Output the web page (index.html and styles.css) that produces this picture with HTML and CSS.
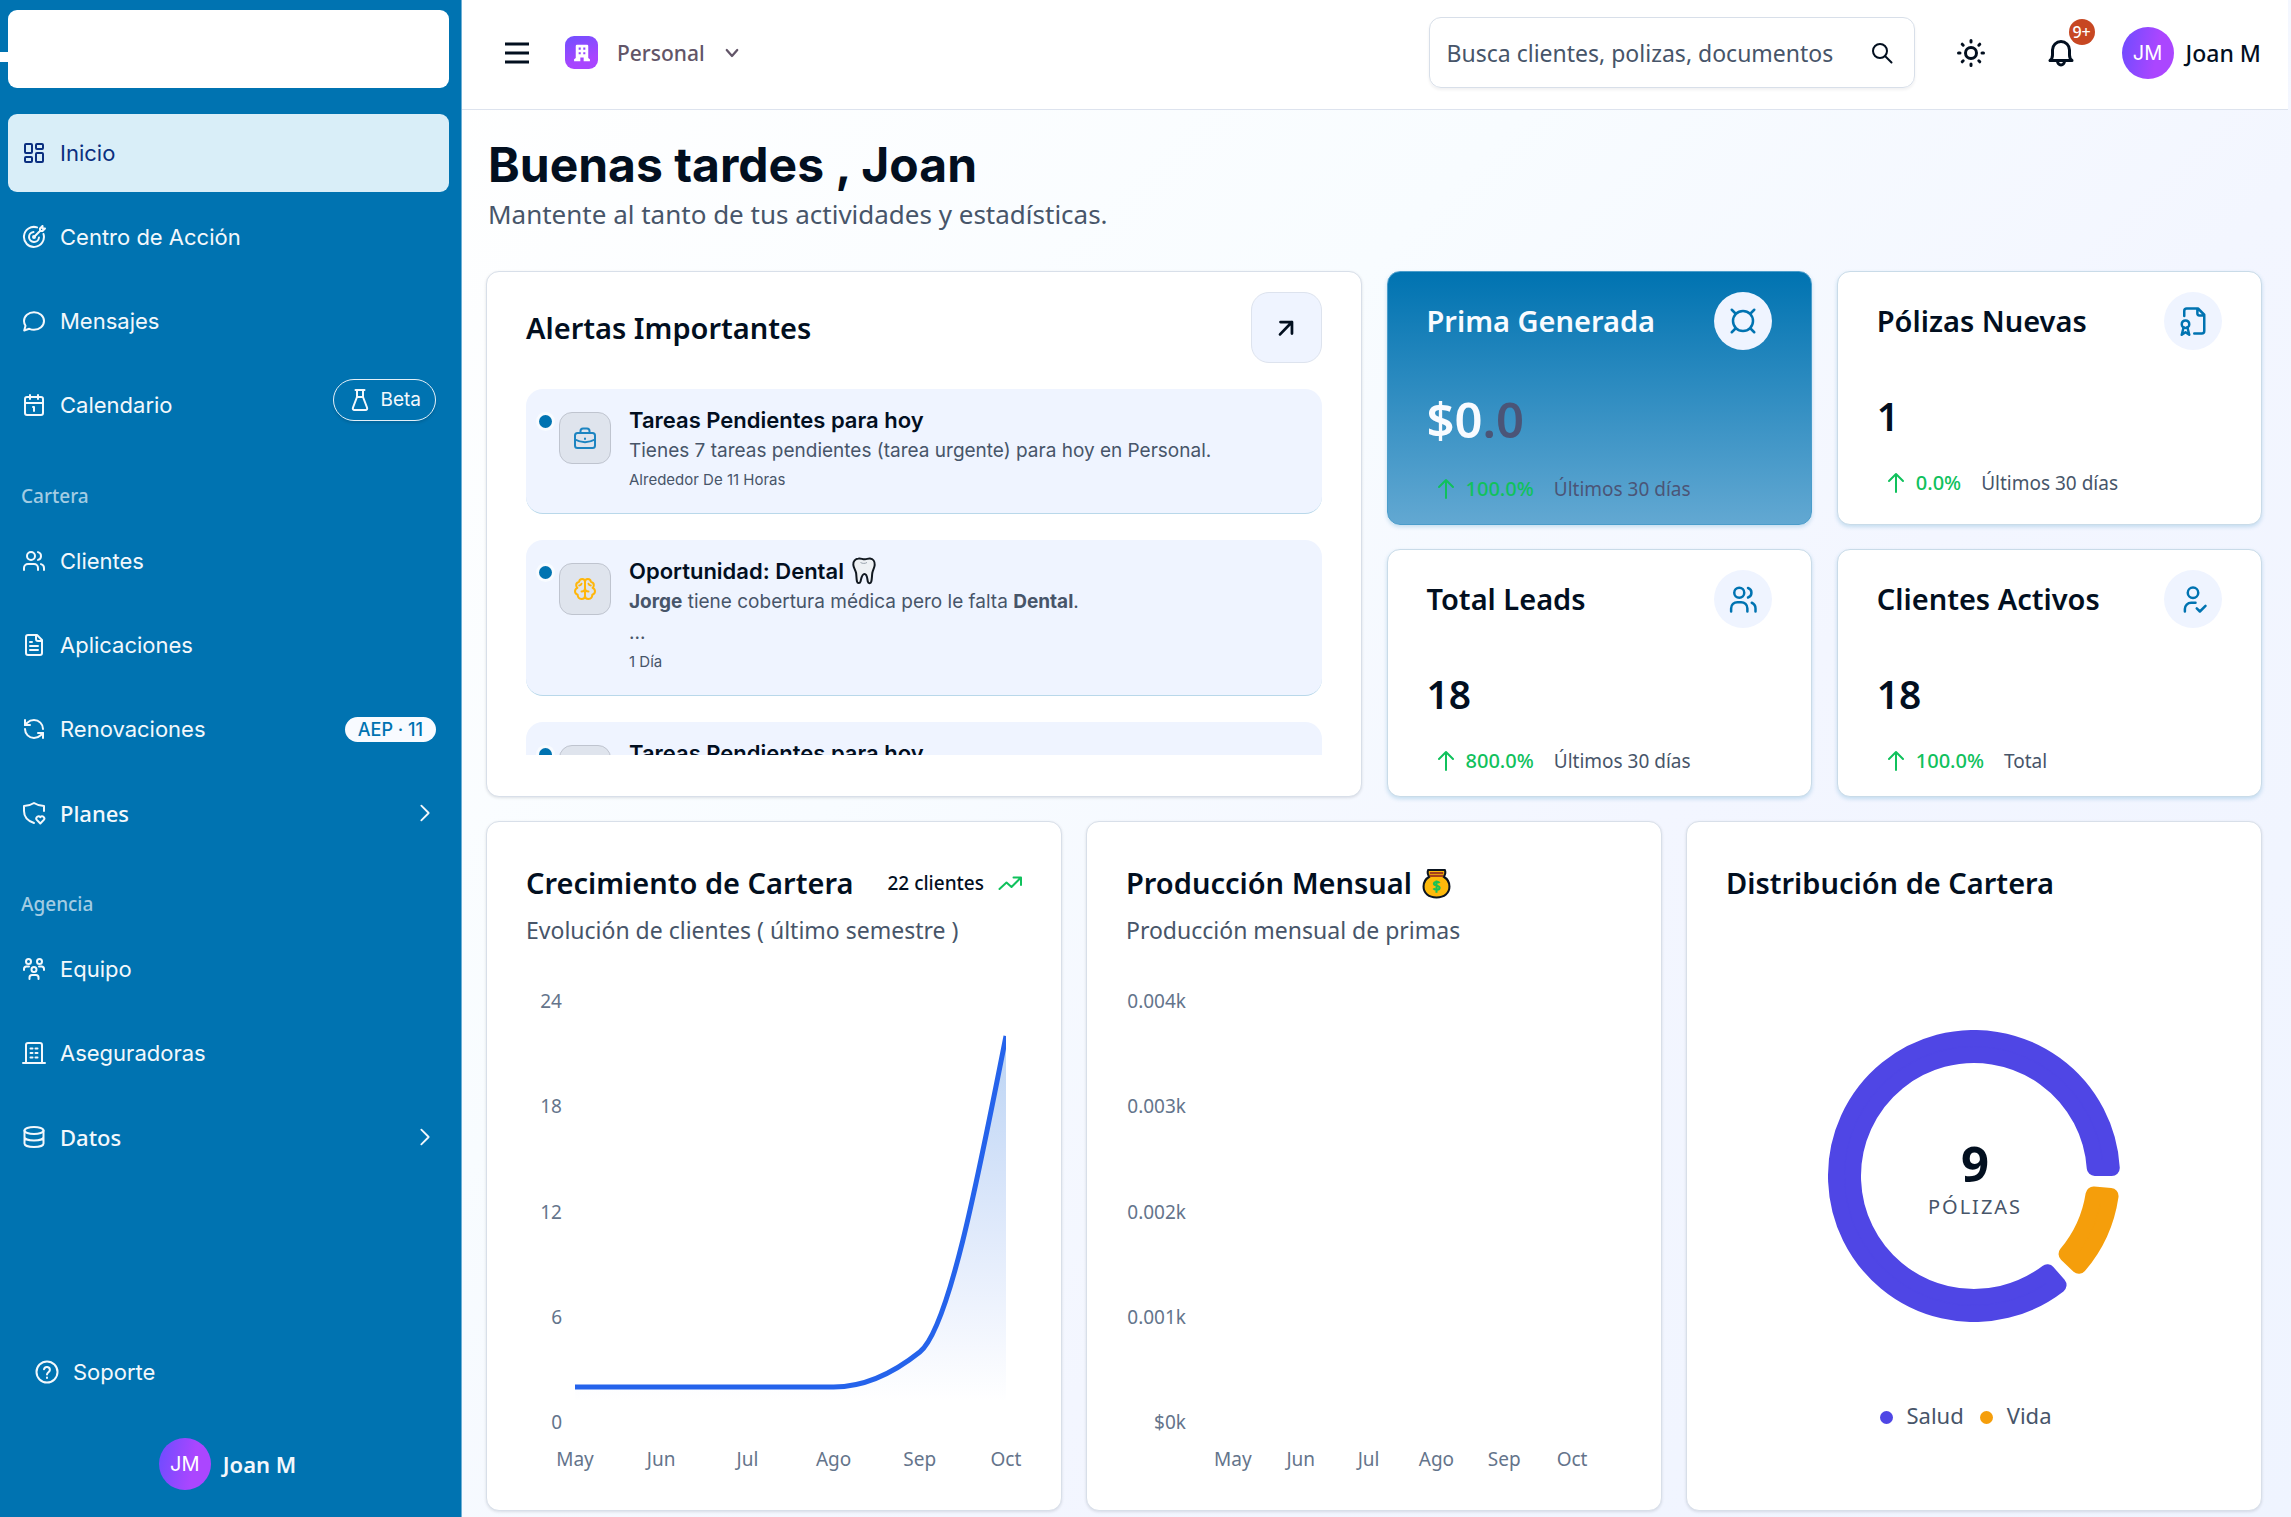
FILE: index.html
```html
<!DOCTYPE html>
<html lang="es">
<head>
<meta charset="utf-8">
<title>Inicio</title>
<meta name="viewport" content="width=device-width, initial-scale=1">
<link rel="stylesheet" href="styles.css">
</head>
<body>
<div class="app">
  <aside class="sidebar">
    <a class="brand" href="#" aria-label="Inicio"></a>
    <nav class="nav">
      <a class="nav-item is-active" href="#">
        <svg class="icon" viewBox="0 0 24 24"><rect x="3" y="3" width="7" height="9" rx="1"/><rect x="14" y="3" width="7" height="5" rx="1"/><rect x="14" y="12" width="7" height="9" rx="1"/><rect x="3" y="16" width="7" height="5" rx="1"/></svg>
        <span>Inicio</span>
      </a>
      <a class="nav-item" href="#">
        <svg class="icon" viewBox="0 0 24 24"><path d="M12 12l6-6V3.500L20.500 1v2.500H23L20.500 6H18"/><path d="M21.500 9A10 10 0 1 1 15 2.400"/><path d="M17 12.500A5 5 0 1 1 11.500 7"/><circle cx="12" cy="12" r="1"/></svg>
        <span>Centro de Acción</span>
      </a>
      <a class="nav-item" href="#">
        <svg class="icon" viewBox="0 0 24 24"><path d="M2.200 21.500l1.300-4.800A8.300 8.300 0 0 1 2 12c0-5 4.500-8.800 10-8.800S22 7 22 12s-4.500 8.800-10 8.800c-1.700 0-3.300-.400-4.700-1z"/></svg>
        <span>Mensajes</span>
      </a>
      <a class="nav-item" href="#">
        <svg class="icon" viewBox="0 0 24 24"><rect x="3" y="4" width="18" height="18" rx="2"/><path d="M8 2v4M16 2v4M3 10h18M11 14h1v4"/></svg>
        <span>Calendario</span>
        <span class="badge-beta"><svg class="icon" viewBox="0 0 24 24"><path d="M9 2v7L5 19.500c-.500 1.500 0 2.500 1.500 2.500h11c1.500 0 2-1 1.500-2.500L15 9V2M7.500 2h9M9 9h6"/></svg>Beta</span>
      </a>
      <h2 class="nav-label">Cartera</h2>
      <a class="nav-item" href="#">
        <svg class="icon" viewBox="0 0 24 24"><path d="M16 21v-2a4 4 0 0 0-4-4H6a4 4 0 0 0-4 4v2"/><circle cx="9" cy="7" r="4"/><path d="M22 21v-2a4 4 0 0 0-3-3.870M16 3.130a4 4 0 0 1 0 7.750"/></svg>
        <span>Clientes</span>
      </a>
      <a class="nav-item" href="#">
        <svg class="icon" viewBox="0 0 24 24"><path d="M15 2H6a2 2 0 0 0-2 2v16a2 2 0 0 0 2 2h12a2 2 0 0 0 2-2V7z"/><path d="M14 2v4a2 2 0 0 0 2 2h4M10 9H8M16 13H8M16 17H8"/></svg>
        <span>Aplicaciones</span>
      </a>
      <a class="nav-item" href="#">
        <svg class="icon" viewBox="0 0 24 24"><path d="M21 12a9 9 0 0 0-9-9 9.750 9.750 0 0 0-6.740 2.740L3 8"/><path d="M3 3v5h5M3 12a9 9 0 0 0 9 9 9.750 9.750 0 0 0 6.740-2.740L21 16"/><path d="M16 16h5v5"/></svg>
        <span>Renovaciones</span>
        <span class="badge-count">AEP · 11</span>
      </a>
      <a class="nav-item alt" href="#">
        <svg class="icon" viewBox="0 0 24 24"><path d="M12 22C6 20 2 15.500 2 10V5c4 0 7-1 10-3 3 2 6 3 10 3v5"/><path d="M18.300 22.500l-3.500-3.600a2.200 2.200 0 0 1 3.500-2.700 2.200 2.200 0 0 1 3.500 2.700z"/></svg>
        <span>Planes</span>
        <svg class="icon chevron" viewBox="0 0 24 24"><path d="M8 4l8 8-8 8"/></svg>
      </a>
      <h2 class="nav-label">Agencia</h2>
      <a class="nav-item" href="#">
        <svg class="icon" viewBox="0 0 24 24"><circle cx="6.500" cy="4.500" r="2.500"/><circle cx="17.500" cy="4.500" r="2.500"/><circle cx="12" cy="12.500" r="2.500"/><path d="M7.500 22v-1.500c0-1.500 1-2.500 2.500-2.500h4c1.500 0 2.500 1 2.500 2.500V22M2 13v-1c0-1.500 1-2.500 2.500-2.500H7M22 13v-1c0-1.500-1-2.500-2.500-2.500H17"/></svg>
        <span>Equipo</span>
      </a>
      <a class="nav-item" href="#">
        <svg class="icon" viewBox="0 0 24 24"><path d="M1 22h22M4 22V4a2 2 0 0 1 2-2h12a2 2 0 0 1 2 2v18M8.500 7.500h2M13.500 7.500h2M8.500 12h2M13.500 12h2M8.500 16.500h2M13.500 16.500h2"/></svg>
        <span>Aseguradoras</span>
      </a>
      <a class="nav-item alt" href="#">
        <svg class="icon" viewBox="0 0 24 24"><ellipse cx="12" cy="5.500" rx="9.500" ry="3.500"/><path d="M2.500 5.500v13c0 2 4 3.500 9.500 3.500s9.500-1.500 9.500-3.500v-13M2.500 12c0 2 4 3.500 9.500 3.500s9.500-1.500 9.500-3.500"/></svg>
        <span>Datos</span>
        <svg class="icon chevron" viewBox="0 0 24 24"><path d="M8 4l8 8-8 8"/></svg>
      </a>
    </nav>
    <div class="sidebar-foot">
      <a class="nav-item support" href="#">
        <svg class="icon" viewBox="0 0 24 24"><circle cx="12" cy="12" r="10.500"/><path d="M9 9.200a3 3 0 0 1 5.900.900c0 2-2.900 2.400-2.900 4.400M12 17.500v.500"/></svg>
        <span>Soporte</span>
      </a>
      <a class="user user-side" href="#"><span class="avatar">JM</span><span>Joan M</span></a>
    </div>
  </aside>

  <div class="page">
    <header class="topbar">
      <button class="icon-btn menu" type="button" aria-label="Menú"><svg class="icon" viewBox="0 0 26 26"><path d="M1 4h24M1 13h24M1 22h24"/></svg></button>
      <button class="workspace" type="button">
        <span class="workspace-logo"><svg viewBox="0 0 24 24"><path fill-rule="evenodd" d="M6 2h12a1.500 1.500 0 0 1 1.500 1.500V18l2 1.500V22H14v-4.500h-4V22H2.500v-2.500l2-1.500V3.500A1.500 1.500 0 0 1 6 2zM8 5.500v2.500h2.500V5.500zm5.500 0v2.500H16V5.500zM8 11v2.500h2.500V11zm5.500 0v2.500H16V11z"/></svg></span>
        <span>Personal</span>
        <svg class="icon caret" viewBox="0 0 24 24"><path d="M5 8l7 8 7-8"/></svg>
      </button>
      <div class="search">
        <input type="text" aria-label="Buscar" placeholder="Busca clientes, polizas, documentos">
        <button class="icon-btn" type="button" aria-label="Buscar"><svg class="icon" viewBox="0 0 24 24"><circle cx="10" cy="10" r="7"/><path d="M15 15l6.500 6.500"/></svg></button>
      </div>
      <button class="icon-btn sun" type="button" aria-label="Tema"><svg class="icon" viewBox="0 0 28 28"><circle cx="14" cy="14" r="5.500"/><path d="M14 1.500v1.500M14 25v1.500M1.500 14H3M25 14h1.500M5.200 5.200l1 1M21.800 21.800l1 1M5.200 22.800l1-1M21.800 6.200l1-1"/></svg></button>
      <button class="icon-btn bell" type="button" aria-label="Notificaciones"><svg class="icon" viewBox="0 0 28 28"><path d="M3 21.500h22c-2-1.500-2.500-3-2.500-5.500v-5a8.500 8.500 0 0 0-17 0v5c0 2.500-.500 4-2.500 5.500zM10.500 22a3.500 4 0 0 0 7 0"/></svg><span class="bell-count">9+</span></button>
      <a class="user user-top" href="#"><span class="avatar">JM</span><span>Joan M</span></a>
    </header>

    <main class="main">
      <h1 class="title">Buenas tardes , Joan</h1>
      <p class="subtitle">Mantente al tanto de tus actividades y estadísticas.</p>

      <div class="stats">
        <section class="card alerts">
          <div class="card-head">
            <h2 class="card-title">Alertas Importantes</h2>
            <button class="open-btn" type="button" aria-label="Abrir"><svg class="icon" viewBox="0 0 24 24"><path d="M6 5.500h12.500V18M18.500 5.500L5.500 19"/></svg></button>
          </div>
          <div class="alert-list">
            <article class="alert">
              <span class="dot"></span>
              <span class="alert-icon blue"><svg class="icon" viewBox="0 0 24 24"><rect x="2" y="7" width="20" height="15" rx="2.500"/><path d="M7.500 7V5A2.500 2.500 0 0 1 10 2.500h4A2.500 2.500 0 0 1 16.500 5v2M2 13.500c6 3.500 14 3.500 20 0M12 12.500v.500"/></svg></span>
              <div class="alert-body"><h3>Tareas Pendientes para hoy</h3><p>Tienes 7 tareas pendientes (tarea urgente) para hoy en Personal.</p><time>Alrededor De 11 Horas</time></div>
            </article>
            <article class="alert">
              <span class="dot"></span>
              <span class="alert-icon amber"><svg class="icon" viewBox="0 0 24 24"><path d="M12 4.500c0-1.500-1.300-2.500-2.800-2.500S6.300 3 6.200 4.800C4.300 5.200 3 6.500 3.200 8.500c.100 1 .500 1.700 1.200 2.300C2.800 11.500 2 12.800 2 14.300c0 1.700 1 3 2.700 3.500C4.800 20.300 6.300 22 8.500 22s3.500-1.400 3.500-3.500z"/><path d="M12 4.500C12 3 13.300 2 14.800 2s2.900 1 3 2.800c1.900.400 3.200 1.700 3 3.700-.100 1-.500 1.700-1.200 2.300 1.600.700 2.400 2 2.400 3.500 0 1.700-1 3-2.700 3.500-.100 2.500-1.600 4.200-3.800 4.200S12 20.600 12 18.500zM8.500 14.500c2 0 3.500-1.500 3.500-3.500 0 2 1.500 3.500 3.500 3.500M6.200 8.500c1.200 0 2-.700 2.300-1.700M17.800 8.500c-1.200 0-2-.700-2.300-1.700"/></svg></span>
              <div class="alert-body">
                <h3>Oportunidad: Dental <svg class="tooth" viewBox="0 0 24 28"><path d="M6.500 1.500C9 1 10.500 2.500 13 2.300c2-.100 3-1 5-.800 3 .300 5 3 4.700 6.500-.300 3.300-2 5-2.400 8-.400 3-.300 6-1 8.500-.500 2.200-3 2.300-3.500 0-.600-2.500-.500-7.500-3.300-7.500S9.200 22 8.500 24.500c-.600 2.300-3 2-3.500 0-.600-2.600-.500-5.500-.900-8.500C3.500 13 1.500 11 1.300 7.800 1 4.300 3.500 2 6.500 1.500z"/><path class="tooth-line" d="M8.500 5.500c2 1.200 4.500 1.200 6.500 0"/></svg></h3>
                <p><strong>Jorge</strong> tiene cobertura médica pero le falta <strong>Dental</strong>.<br>...</p><time>1 Día</time></div>
            </article>
            <article class="alert">
              <span class="dot"></span>
              <span class="alert-icon blue"></span>
              <div class="alert-body"><h3>Tareas Pendientes para hoy</h3></div>
            </article>
          </div>
        </section>

        <section class="card stat primary">
          <div class="card-head"><h2 class="card-title">Prima Generada</h2><span class="stat-icon"><svg class="icon" viewBox="0 0 24 24"><circle cx="12" cy="12" r="8"/><path d="M3 3l3 3M21 3l-3 3M3 21l3-3M21 21l-3-3"/></svg></span></div>
          <p class="value">$0<span>.0</span></p>
          <p class="trend"><svg class="icon" viewBox="0 0 24 24"><path d="M12 21V3M5 10l7-7 7 7"/></svg><b>100.0%</b><span>Últimos 30 días</span></p>
        </section>
        <section class="card stat">
          <div class="card-head"><h2 class="card-title">Pólizas Nuevas</h2><span class="stat-icon"><svg class="icon" viewBox="0 0 24 24"><path d="M5 8V4a2 2 0 0 1 2-2h9l5 5v13a2 2 0 0 1-2 2h-6M15.500 2v4a1.500 1.500 0 0 0 1.500 1.500h4"/><circle cx="6" cy="14.500" r="3"/><path d="M4.500 17L3 23l3-2 3 2-1.500-6"/></svg></span></div>
          <p class="value">1</p>
          <p class="trend"><svg class="icon" viewBox="0 0 24 24"><path d="M12 21V3M5 10l7-7 7 7"/></svg><b>0.0%</b><span>Últimos 30 días</span></p>
        </section>
        <section class="card stat">
          <div class="card-head"><h2 class="card-title">Total Leads</h2><span class="stat-icon"><svg class="icon" viewBox="0 0 24 24"><circle cx="9" cy="7" r="4"/><path d="M2.500 22v-2.500a5 5 0 0 1 5-5h3a5 5 0 0 1 5 5V22M22 22v-2.500a5 5 0 0 0-3-4.500M16 3.200a4 4 0 0 1 0 7.600"/></svg></span></div>
          <p class="value">18</p>
          <p class="trend"><svg class="icon" viewBox="0 0 24 24"><path d="M12 21V3M5 10l7-7 7 7"/></svg><b>800.0%</b><span>Últimos 30 días</span></p>
        </section>
        <section class="card stat">
          <div class="card-head"><h2 class="card-title">Clientes Activos</h2><span class="stat-icon"><svg class="icon" viewBox="0 0 24 24"><circle cx="12" cy="7" r="4.200"/><path d="M5.500 22v-2a5 5 0 0 1 5-5h3.500M15 19.500l2.500 2.500 4.500-4.500"/></svg></span></div>
          <p class="value">18</p>
          <p class="trend"><svg class="icon" viewBox="0 0 24 24"><path d="M12 21V3M5 10l7-7 7 7"/></svg><b>100.0%</b><span>Total</span></p>
        </section>
      </div>

      <div class="charts">
        <section class="card chart-card">
          <div class="chart-head">
            <h2 class="card-title">Crecimiento de Cartera</h2>
            <p class="clients">22 clientes <svg class="icon" viewBox="0 0 24 24"><path d="M1.500 18l7-6.500 5 4.500L22.500 7M15.500 6.500H23V14"/></svg></p>
          </div>
          <p class="chart-sub">Evolución de clientes ( último semestre )</p>
          <div class="chart line-chart">
            <div class="y-axis"><span>24</span><span>18</span><span>12</span><span>6</span><span>0</span></div>
            <svg class="plot" viewBox="0 0 431 421" preserveAspectRatio="none">
              <defs><linearGradient id="area" x1="0" y1="0" x2="0" y2="1"><stop offset="0" stop-color="#1d6fd8" stop-opacity=".3"/><stop offset=".95" stop-color="#2563eb" stop-opacity="0"/></linearGradient></defs>
              <path class="area" d="M0 386H258.600C287.300 386 316 374 344.800 351 373.500 328 402.300 181 431 35V421H0z"/>
              <path class="line" d="M0 386H258.600C287.300 386 316 374 344.800 351 373.500 328 402.300 181 431 35"/>
            </svg>
            <div class="x-axis points"><span>May</span><span>Jun</span><span>Jul</span><span>Ago</span><span>Sep</span><span>Oct</span></div>
          </div>
        </section>

        <section class="card chart-card">
          <div class="chart-head">
            <h2 class="card-title">Producción Mensual <svg class="bag" viewBox="0 0 28 30"><path class="bag-body" d="M6 2h16c1 2 0 5-1 6.500 3.500 2 5.500 5.500 5.500 9.500 0 6.500-5 10.500-12.500 10.500S1.500 24.500 1.500 18c0-4 2-7.500 5.500-9.500C6 7 5 4 6 2z"/><path class="bag-tie" d="M7.500 7.800h13M7.500 5h13"/><path class="bag-sign" d="M17 14.500c-1-1.500-5.500-1.500-5.500.800s5.500 1.300 5.500 3.800-4.800 2.400-6 .600M14 12v12"/></svg></h2>
          </div>
          <p class="chart-sub">Producción mensual de primas</p>
          <div class="chart bar-chart">
            <div class="y-axis"><span>0.004k</span><span>0.003k</span><span>0.002k</span><span>0.001k</span><span>$0k</span></div>
            <div class="plot"></div>
            <div class="x-axis"><span>May</span><span>Jun</span><span>Jul</span><span>Ago</span><span>Sep</span><span>Oct</span></div>
          </div>
        </section>

        <section class="card chart-card">
          <div class="chart-head"><h2 class="card-title">Distribución de Cartera</h2></div>
          <svg class="donut" viewBox="-146 -146 292 292">
            <path class="salud" d="M137.770-8A138 138 0 1 0 84.540 109.080L73.340 96.240A121 121 0 1 1 120.730-8z"/>
            <path class="vida" d="M136.550 19.980A138 138 0 0 1 104.830 89.770L92.550 77.950A121 121 0 0 0 119.570 18.500z"/>
            <text class="donut-total" x="1" y="6">9</text>
            <text class="donut-label" x="1" y="38">PÓLIZAS</text>
          </svg>
          <ul class="legend"><li class="salud">Salud</li><li class="vida">Vida</li></ul>
        </section>
      </div>
    </main>
  </div>
</div>
</body>
</html>
```

FILE: styles.css
```css
*, *::before, *::after { box-sizing: border-box; }

:root {
  --blue: #0073b1;
  --ink: #020f1f;
  --muted: #475569;
  --axis: #64748b;
  --border: #d8dfe9;
  --soft: #eff4ff;
  --green: #10c15c;
  --grotesk: Inter, "Liberation Sans", sans-serif;
  --sans: "Noto Sans", sans-serif;
}

body { margin: 0; font-family: var(--sans); color: var(--ink); background: var(--soft); }
h1, h2, h3, p, ul { margin: 0; padding: 0; font-weight: inherit; }
a { color: inherit; text-decoration: none; }
button { font: inherit; color: inherit; background: none; border: 0; padding: 0; cursor: pointer; }
svg { display: block; flex: none; }
.icon { width: 24px; height: 24px; fill: none; stroke: currentColor; stroke-width: 2; stroke-linecap: round; stroke-linejoin: round; }

.app { display: grid; grid-template-columns: 462px minmax(0, 1fr); min-height: 100vh; }

/* Sidebar */
.sidebar { display: flex; flex-direction: column; padding: 10px 12px 28px 8px; background: var(--blue); border-right: 1px solid #6fb0d5; color: #f3f8fc; }
.brand { position: relative; height: 78px; margin-bottom: 26px; border-radius: 9px; background: #fff; }
.brand::before { content: ""; position: absolute; left: -8px; top: 42px; width: 8px; height: 10px; background: #fff; }
.nav { display: flex; flex-direction: column; gap: 6px; }
.nav-item { display: flex; align-items: center; gap: 14px; height: 78px; padding: 0 13px 0 14px; border-radius: 9px; font: 400 22px/30px var(--grotesk); }
.nav-item.alt { font-family: var(--sans); font-weight: 500; }
.nav-item.is-active { background: #d9eef8; color: #0b2f80; }
.nav-label { height: 66px; padding: 31px 13px 0; font-size: 19px; line-height: 30px; font-weight: 500; color: #a3cce3; }
.chevron { width: 22px; height: 22px; margin-left: auto; }
.badge-beta { display: flex; align-items: center; gap: 9px; height: 42px; margin: 0 0 10px auto; padding: 0 14px; border: 1px solid #e3f0f8; border-radius: 21px; font-size: 19px; box-shadow: 0 2px 3px rgb(0 0 0 / 12%); }
.badge-count { margin-left: auto; padding: 0 13px; border-radius: 13px; background: #f8fbff; color: var(--blue); font-size: 18px; line-height: 25px; font-weight: 500; }
.sidebar-foot { margin-top: auto; display: flex; flex-direction: column; gap: 27px; padding-left: 13px; }
.user { display: flex; align-items: center; gap: 12px; font-size: 22px; line-height: 30px; font-weight: 600; }
.user-top { font-size: 23px; font-weight: 500; }
.user-side { align-self: center; margin-right: 15px; }
.avatar { display: grid; place-items: center; width: 52px; height: 52px; border-radius: 50%; background: linear-gradient(100deg, #6d4cff, #ab46ff 65%); color: #fff; font: 400 20px/26px var(--grotesk); }

/* Top bar */
.page { display: flex; flex-direction: column; background: linear-gradient(135deg, #fff, #f8fcff 35%, #f3f6ff 60%, #eff4ff); }
.topbar { display: flex; align-items: center; height: 110px; margin-right: 3px; padding: 0 27px 4px 42px; background: #fff; border-bottom: 1px solid #dde3ee; }
.menu { margin-right: 35px; }
.menu .icon { width: 26px; height: 26px; stroke-linecap: butt; stroke-width: 3; }
.workspace { display: flex; align-items: center; font-size: 21px; font-weight: 500; color: #625568; }
.workspace-logo { display: grid; place-items: center; width: 33px; height: 33px; margin-right: 19px; border-radius: 9px; background: linear-gradient(160deg, #7050ff, #a845ff 70%); }
.workspace-logo svg { width: 20px; height: 20px; fill: #fff; }
.caret { width: 18px; height: 18px; margin-left: 18px; stroke-width: 3; }
.search { display: flex; align-items: center; width: 486px; height: 71px; margin-left: auto; padding: 0 20px 0 17px; border: 1px solid var(--border); border-radius: 12px; box-shadow: 0 2px 3px rgb(15 23 42 / 6%); }
.search input { flex: 1; min-width: 0; padding: 0; border: 0; outline: 0; background: none; font: 400 23px/34px var(--sans); }
.search input::placeholder { color: var(--muted); opacity: 1; }
.sun { margin-left: 42px; }
.sun .icon, .bell .icon { width: 28px; height: 28px; stroke-width: 3; }
.bell { position: relative; margin: 0 47px 0 62px; }
.bell .icon { stroke-width: 3; }
.bell-count { position: absolute; left: 22px; top: -20px; width: 26px; height: 26px; border-radius: 50%; background: #c74722; color: #fff; font-size: 16px; line-height: 26px; font-weight: 500; }

/* Main */
.main { padding: 25px 29px 7px 24px; }
.title { padding-left: 2px; font: 700 48px/60px var(--grotesk); }
.subtitle { margin: 1px 0 39px; padding-left: 2px; font-size: 26px; line-height: 36px; color: var(--muted); }
.card { border: 1px solid var(--border); border-radius: 13px; background: #fff; box-shadow: 0 1px 3px rgb(15 23 42 / 12%); }
.card-title { font-size: 29px; line-height: 40px; font-weight: 600; white-space: nowrap; }
.card-head { display: flex; align-items: center; justify-content: space-between; }
.stats { display: grid; grid-template-columns: repeat(4, minmax(0, 1fr)); gap: 24px 25px; margin-bottom: 24px; }

.alerts { grid-column: span 2; grid-row: span 2; display: flex; flex-direction: column; gap: 26px; padding: 20px 39px 41px; }
.open-btn { display: grid; place-items: center; width: 71px; height: 71px; border: 1px solid #dde3ee; border-radius: 18px; background: var(--soft); }
.open-btn .icon { width: 22px; height: 22px; stroke-width: 3; }
.alert-list { flex: 1 1 0; min-height: 0; overflow: hidden; display: flex; flex-direction: column; gap: 26px; }
.alert { flex: none; display: flex; align-items: flex-start; padding: 16px 13px 20px; border-bottom: 1px solid #b9d8ea; border-radius: 17px; background: var(--soft); font-family: var(--grotesk); }
.dot { width: 13px; height: 13px; margin: 10px 7px 0 0; border-radius: 50%; background: var(--blue); box-shadow: 0 0 0 3px #f8fbff; }
.alert-icon { display: grid; place-items: center; width: 52px; height: 52px; margin: 7px 18px 0 0; border: 1px solid #bfc4cf; border-radius: 13px; background: #dfe4ed; }
.alert-icon.blue { color: #1c84c1; }
.alert-icon.amber { color: #ffb60a; }
.alert h3 { display: flex; align-items: center; gap: 8px; font-size: 22px; line-height: 30px; font-weight: 600; }
.alert p { font-size: 19px; line-height: 31px; color: var(--muted); }
.alert time { display: block; padding-top: 1px; font-size: 15px; line-height: 26px; color: var(--muted); }
.tooth { width: 24px; height: 28px; fill: #eef1f4; stroke: #111820; stroke-width: 2; }
.tooth-line { fill: none; stroke: #9aa3ad; stroke-width: 1; }

.stat { padding: 20px 39px; border-color: #c9dbe8; box-shadow: 0 2px 4px rgb(0 115 177 / 20%); }
.stat-icon { display: grid; place-items: center; width: 58px; height: 58px; border-radius: 50%; background: var(--soft); color: var(--blue); }
.stat-icon .icon { width: 30px; height: 30px; }
.value { margin: 40px 0 26px; font-size: 39px; line-height: 52px; font-weight: 600; }
.trend { display: flex; align-items: center; padding-left: 7px; font-size: 19px; line-height: 30px; color: var(--muted); }
.trend .icon { margin-right: 8px; color: var(--green); }
.trend b { margin-right: 20px; font-size: 20px; font-weight: 500; color: var(--green); }
.primary { border-color: #4b9dcb; background: linear-gradient(#0073b1, #62a8d2); }
.primary .card-title, .primary .value { color: #f8fbff; }
.primary .value { font-size: 49px; line-height: 58px; }
.primary .value span, .primary .trend { color: #4b5577; }

/* Charts */
.charts { display: grid; grid-template-columns: repeat(3, minmax(0, 1fr)); gap: 24px; }
.chart-card { display: flex; flex-direction: column; padding: 41px 39px 38px; }
.chart-head { display: flex; align-items: center; justify-content: space-between; }
.chart-head .card-title { display: flex; align-items: center; gap: 10px; }
.clients { display: flex; align-items: center; gap: 14px; font-size: 19px; line-height: 26px; font-weight: 500; white-space: nowrap; }
.clients .icon { color: var(--green); }
.chart-sub { margin: 11px 0 42px; font-size: 23px; line-height: 32px; color: var(--muted); }
.bag { width: 29px; height: 33px; }
.bag-body { fill: #fdb90b; stroke: #0b1420; stroke-width: 2; }
.bag-tie { fill: none; stroke: #a5401c; stroke-width: 2; }
.bag-sign { fill: none; stroke: #19c155; stroke-width: 2; }
.chart { display: grid; row-gap: 11px; column-gap: 13px; padding-right: 16px; font-size: 19px; line-height: 26px; color: var(--axis); }
.line-chart { grid-template-columns: 36px minmax(0, 1fr); }
.bar-chart { grid-template-columns: 60px minmax(0, 1fr); }
.y-axis { display: flex; flex-direction: column; justify-content: space-between; height: 447px; text-align: right; }
.plot { width: 100%; height: 421px; margin: 13px 0; }
.area { fill: url(#area); }
.line { fill: none; stroke: #2563eb; stroke-width: 5; vector-effect: non-scaling-stroke; }
.x-axis { grid-column: 2; display: flex; justify-content: space-between; }
.x-axis span { flex: 1; text-align: center; }
.x-axis.points span { flex: none; width: 0; display: flex; justify-content: center; }
.donut { width: 292px; height: 292px; margin: 127px auto 77px; stroke-width: 16; stroke-linejoin: round; }
.donut .salud { fill: #4f46e5; stroke: #4f46e5; }
.donut .vida { fill: #f59e0b; stroke: #f59e0b; }
.donut text { stroke: none; text-anchor: middle; font-family: var(--sans); }
.donut-total { font-size: 49px; font-weight: 700; fill: var(--ink); }
.donut-label { font-size: 20px; letter-spacing: 2px; fill: var(--muted); }
.legend { display: flex; justify-content: center; gap: 16px; padding-right: 17px; list-style: none; font-size: 22px; line-height: 32px; color: var(--muted); }
.legend li { display: flex; align-items: center; gap: 14px; }
.legend li::before { content: ""; width: 13px; height: 13px; margin-top: 4px; border-radius: 50%; background: #4f46e5; }
.legend .vida::before { background: #f59e0b; }
```
